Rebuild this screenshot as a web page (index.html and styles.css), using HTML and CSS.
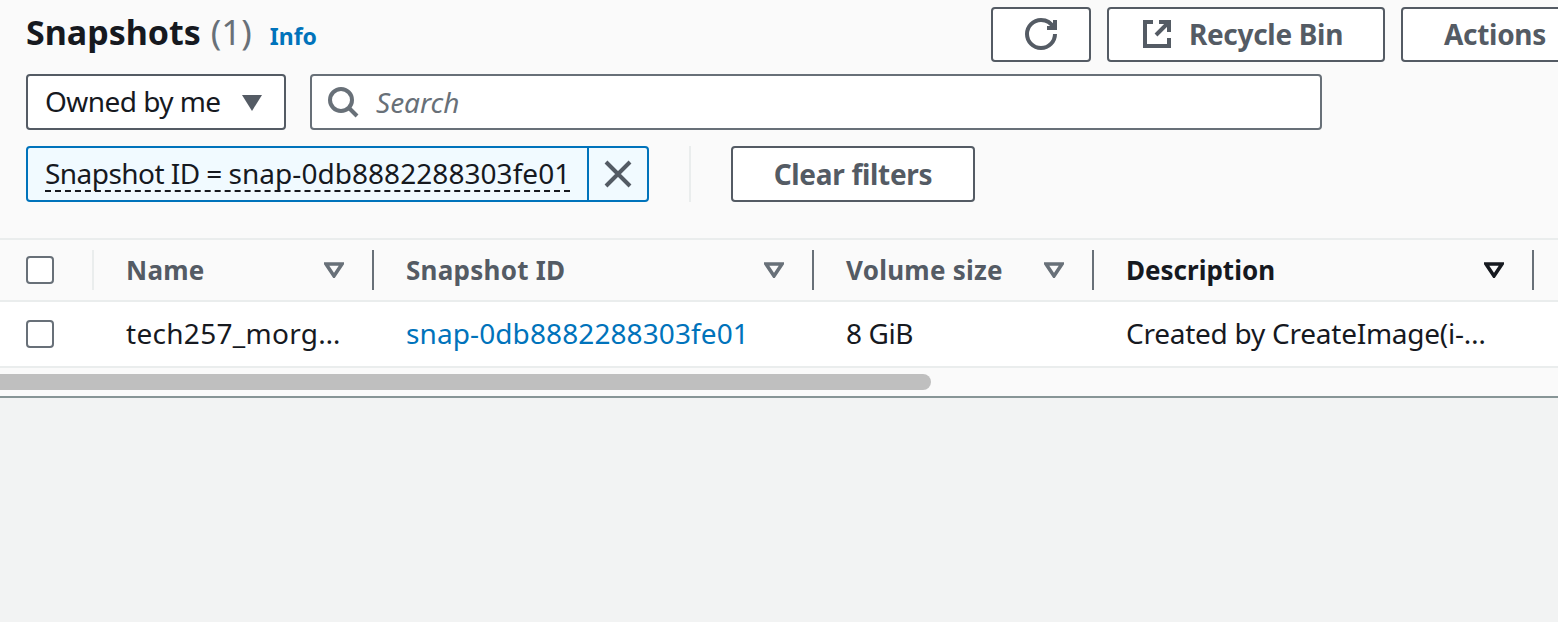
FILE: index.html
```html
<!DOCTYPE html>
<html lang="en">
<head>
  <meta charset="UTF-8">
  <title>Snapshots</title>
  <link rel="stylesheet" href="styles.css">
</head>
<body>

<section class="card">
  <div class="top-row">
    <div class="title-group">
      <h1>Snapshots <span class="count">(1)</span></h1>
      <a class="info" href="#">Info</a>
    </div>
    <div class="actions">
      <button class="btn btn-refresh">
        <svg class="icon" viewBox="0 0 16 16"><path d="M15 8c0 3.87-3.13 7-7 7s-7-3.13-7-7 3.13-7 7-7c2.79 0 5.2 1.63 6.33 4"/><path d="M15 1v4h-4" stroke-linejoin="miter"/></svg>
      </button>
      <button class="btn btn-recycle">
        <svg class="icon" viewBox="0 0 16 16"><path d="M14 7V2H9M14 2 7.5 8.5M6 2H2v12h12v-4" stroke-linejoin="miter"/></svg>
        Recycle Bin
      </button>
      <button class="btn btn-actions">Actions</button>
    </div>
  </div>

  <div class="filter-row">
    <div class="select">
      <span class="select-text">Owned by me</span>
      <svg class="caret-solid" viewBox="0 0 20 16"><path d="M0 0h20L10 16z"/></svg>
    </div>
    <div class="search">
      <svg class="icon search-icon" viewBox="0 0 16 16"><circle cx="7" cy="7" r="5.5"/><path d="M11 11l4 4"/></svg>
      <span class="placeholder">Search</span>
    </div>
  </div>

  <div class="token-row">
    <div class="token">
      <span class="token-label"><span class="token-text"><span class="token-key">Snapshot ID = </span>snap-0db8882288303fe01</span></span>
      <span class="token-close">
        <svg class="icon" viewBox="0 0 16 16"><path d="M2 2l12 12M14 2 2 14"/></svg>
      </span>
    </div>
    <div class="token-sep"></div>
    <button class="btn btn-clear">Clear filters</button>
  </div>

  <div class="table-head grid">
    <div class="cell cell-check first-div"><span class="checkbox"></span></div>
    <div class="cell cell-head">
      <span class="head-label">Name</span>
      <svg class="sort" viewBox="0 0 20 16"><path d="M2 2h16l-8 12z"/></svg>
    </div>
    <div class="cell cell-head">
      <span class="head-label">Snapshot ID</span>
      <svg class="sort" viewBox="0 0 20 16"><path d="M2 2h16l-8 12z"/></svg>
    </div>
    <div class="cell cell-head">
      <span class="head-label">Volume size</span>
      <svg class="sort" viewBox="0 0 20 16"><path d="M2 2h16l-8 12z"/></svg>
    </div>
    <div class="cell cell-head active">
      <span class="head-label">Description</span>
      <svg class="sort" viewBox="0 0 20 16"><path d="M2 2h16l-8 12z"/></svg>
    </div>
  </div>

  <div class="table-row grid">
    <div class="td td-check"><span class="checkbox"></span></div>
    <div class="td name-text">tech257_morg…</div>
    <div class="td"><a class="link" href="#">snap-0db8882288303fe01</a></div>
    <div class="td size-text">8 GiB</div>
    <div class="td desc-text">Created by CreateImage(i-…</div>
  </div>

  <div class="scroll-track"><div class="scroll-thumb"></div></div>
</section>

</body>
</html>
```

FILE: styles.css
```css
* {
  box-sizing: border-box;
}

html, body {
  height: 100%;
}

body {
  margin: 0;
  background: #f2f3f3;
  color: #16191f;
  font-family: "Noto Sans", "Open Sans", Arial, sans-serif;
  font-size: 28px;
  overflow: hidden;
}

.card {
  width: 100%;
  height: 398px;
  background: #fafafa;
  border-bottom: 2px solid #879596;
  overflow: hidden;
}

.icon {
  width: 32px;
  height: 32px;
  fill: none;
  stroke: #545b64;
  stroke-width: 2;
  flex: none;
}

/* top row */
.top-row {
  display: flex;
  height: 74px;
  padding: 7px 0 0 26px;
}

.title-group {
  flex: none;
  width: 965px;
  display: flex;
  align-items: baseline;
  gap: 18px;
  height: 50px;
}

h1 {
  margin: 0;
  font-size: 34px;
  line-height: 50px;
  font-weight: 700;
}

.count {
  font-weight: 400;
  font-size: 35px;
  margin-left: 1px;
  color: #687078;
}

.info {
  color: #0073bb;
  font-size: 23px;
  font-weight: 700;
  text-decoration: none;
}

.actions {
  flex: none;
  display: flex;
  gap: 16px;
}

.btn {
  display: flex;
  align-items: center;
  justify-content: center;
  height: 55px;
  background: #fff;
  border: 2px solid #545b64;
  border-radius: 4px;
  color: #545b64;
  font: 700 28px "Noto Sans", "Open Sans", Arial, sans-serif;
  letter-spacing: -0.3px;
  padding: 0 0 2px;
}

.btn-refresh {
  width: 100px;
}

.btn-recycle {
  width: 278px;
  gap: 16px;
  padding-right: 8px;
}

.btn-actions {
  width: 240px;
  justify-content: flex-start;
  padding-left: 41px;
}

/* filter rows */
.filter-row {
  display: flex;
  gap: 24px;
  height: 72px;
  padding-left: 26px;
}

.select {
  width: 260px;
  height: 56px;
  display: flex;
  align-items: center;
  justify-content: space-between;
  background: #fff;
  border: 2px solid #545b64;
  border-radius: 4px;
  padding: 0 22px 2px 17px;
}

.select-text {
  letter-spacing: -0.55px;
}

.caret-solid {
  width: 20px;
  height: 16px;
  margin-top: 3px;
  fill: #545b64;
}

.search {
  width: 1012px;
  height: 56px;
  display: flex;
  align-items: center;
  gap: 17px;
  background: #fff;
  border: 2px solid #687078;
  border-radius: 4px;
  padding-left: 15px;
}

.search-icon {
  stroke: #687078;
  stroke-width: 2;
}

.placeholder {
  color: #687078;
  font-style: italic;
}

.token-row {
  display: flex;
  align-items: flex-start;
  height: 92px;
  padding-left: 26px;
}

.token {
  display: flex;
  width: 623px;
  height: 56px;
  background: #f1faff;
  border: 2px solid #0073bb;
  border-radius: 4px;
}

.token-label {
  flex: 1;
  display: flex;
  align-items: center;
  padding-left: 17px;
  border-right: 2px solid #0073bb;
}

.token-text {
  border-bottom: 2px dashed #16191f;
  line-height: 34px;
  white-space: pre;
  letter-spacing: 0.05px;
}

.token-key {
  letter-spacing: -0.55px;
}

.token-close {
  width: 58px;
  display: flex;
  align-items: center;
  justify-content: center;
}

.token-sep {
  width: 2px;
  height: 56px;
  margin: 0 40px;
  background: #eaeded;
}

.btn-clear {
  width: 244px;
  height: 56px;
  padding-bottom: 0;
}

/* table */
.grid {
  display: grid;
  grid-template-columns: 94px 280px 440px 280px 440px;
}

.table-head {
  height: 64px;
  border-top: 2px solid #eaeded;
  border-bottom: 2px solid #eaeded;
  align-items: center;
  background: #fafafa;
}

.cell {
  height: 40px;
  display: flex;
  align-items: center;
  border-right: 2px solid #687078;
}

.cell-check {
  padding-left: 26px;
  border-right-color: #eaeded;
}

.cell-head {
  justify-content: space-between;
  padding: 0 28px 0 32px;
}

.head-label {
  color: #545b64;
  font-weight: 700;
  font-size: 26px;
  letter-spacing: 0.25px;
}

.sort {
  width: 20px;
  height: 16px;
  fill: none;
  stroke: #687078;
  stroke-width: 3.5;
}

.active .head-label {
  color: #16191f;
  letter-spacing: 0;
}

.active .sort {
  stroke: #16191f;
}

.checkbox {
  display: block;
  width: 28px;
  height: 28px;
  background: #fff;
  border: 2px solid #687078;
  border-radius: 4px;
}

.table-row {
  height: 66px;
  background: #fff;
  border-bottom: 2px solid #eaeded;
  align-items: center;
}

.td {
  padding: 0 0 2px 32px;
  min-width: 0;
  white-space: nowrap;
}

.td-check {
  padding: 0 0 0 26px;
}

.name-text {
  letter-spacing: 0.3px;
}

.size-text {
  letter-spacing: -0.4px;
}

.desc-text {
  letter-spacing: -0.25px;
}

.link {
  color: #0073bb;
  text-decoration: none;
  letter-spacing: 0.1px;
}

.scroll-track {
  padding-top: 6px;
}

.scroll-thumb {
  width: 931px;
  height: 16px;
  background: #bfbfbf;
  border-radius: 0 8px 8px 0;
}
```
